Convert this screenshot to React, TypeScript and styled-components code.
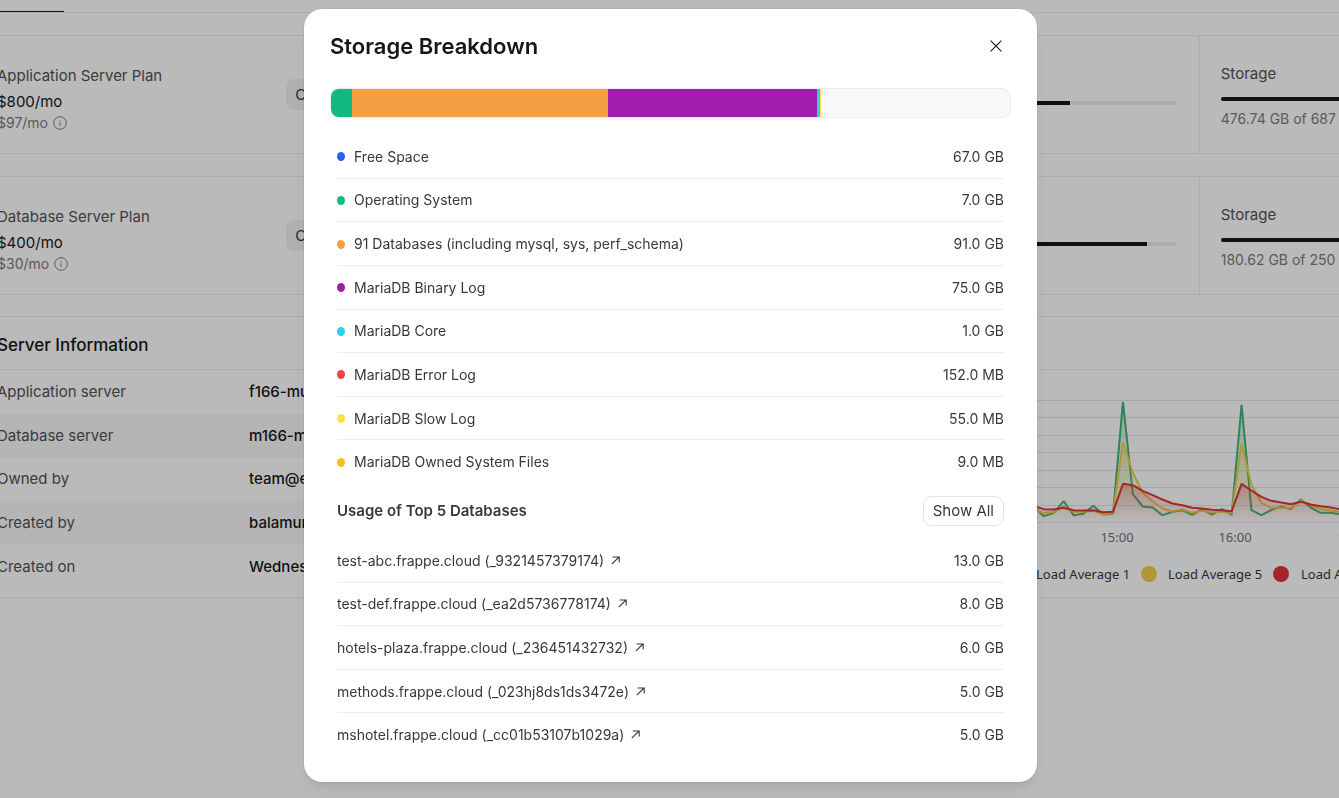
import React from 'react';
import styled, { createGlobalStyle } from 'styled-components';

const GlobalStyle = createGlobalStyle`
  *, *::before, *::after { box-sizing: border-box; }
  html, body, #root { height: 100%; }
  body {
    margin: 0;
    overflow: hidden;
    background: #fff;
    color: #383838;
    font-family: Inter, "Liberation Sans", sans-serif;
    font-size: 15px;
    line-height: 20px;
  }
  h1, h2, h3, p, dl, dd, ul { margin: 0; padding: 0; }
  button { font: inherit; cursor: pointer; }
`;

/* ---------- server overview page ---------- */

const Viewport = styled.div`
  height: 100%;
  overflow: hidden;
`;

const Page = styled.main`
  width: calc(100% + 292px);
  margin-left: -24px;
  display: flex;
  flex-direction: column;
  gap: 22px;
`;

const TabBar = styled.nav`
  height: 13px;
  display: flex;
  align-items: flex-end;
  padding-left: 22px;
  border-bottom: 1px solid #ededed;
`;

const ActiveTab = styled.a`
  width: 66px;
  height: 12px;
  border-bottom: 1px solid #171717;
`;

const Card = styled.section`
  display: grid;
  grid-template-columns: repeat(4, 1fr);
  height: 119px;
  border: 1px solid #ededed;
  border-radius: 8px;
`;

const PlanCell = styled.div`
  display: flex;
  align-items: center;
  justify-content: space-between;
  padding: 0 23px 0 20px;
`;

const PlanText = styled.div`
  padding-top: 10px;
`;

const PlanName = styled.h3`
  font-size: 15px;
  font-weight: 400;
  line-height: 20px;
  color: #525252;
  margin-bottom: 5px;
`;

const Price = styled.p`
  font-size: 15px;
  line-height: 22px;
  color: #171717;
`;

const DailyPrice = styled.p`
  display: flex;
  align-items: center;
  gap: 5px;
  font-size: 14px;
  line-height: 20px;
  color: #7c7c7c;
`;

const SubtleButton = styled.button`
  height: 31px;
  width: 75px;
  padding: 0 9px;
  border: 0;
  border-radius: 8px;
  background: #f1f1f1;
  color: #383838;
  text-align: left;
`;

const MeterCell = styled.div`
  padding: 28px 22px 0 21px;
  border-left: 1px solid #ededed;
`;

const MeterLabel = styled.div<{ $tall?: boolean }>`
  height: ${(p) => (p.$tall ? 37 : 33)}px;
  line-height: 20px;
  color: #525252;
`;

const Meter = styled.div`
  height: 4px;
  margin-bottom: 8px;
  border-radius: 2px;
  background: #ededed;
  overflow: hidden;
`;

const MeterFill = styled.div`
  height: 100%;
  background: #171717;
`;

const MeterCaption = styled.p`
  font-size: 14px;
  white-space: nowrap;
  color: #7c7c7c;
`;

const Panels = styled.div`
  display: grid;
  grid-template-columns: 1fr 1fr;
  gap: 22px;
  margin-top: -1px;
`;

const Panel = styled.section`
  height: 282px;
  border: 1px solid #ededed;
  border-radius: 8px;
  overflow: hidden;
`;

const PanelHeader = styled.header`
  height: 53px;
  display: flex;
  align-items: center;
  padding: 4px 20px 0;
  border-bottom: 1px solid #ededed;
`;

const PanelTitle = styled.h2`
  font-size: 17px;
  line-height: 24px;
  font-weight: 500;
  color: #171717;
`;

const Facts = styled.dl`
  display: grid;
  grid-auto-rows: 1fr;
  height: 219px;
`;

const Fact = styled.div`
  display: grid;
  grid-template-columns: 252px 1fr;
  align-items: center;
  padding: 0 20px;
  color: #525252;
  &:nth-child(even) { background: #f8f8f8; }
`;

const FactValue = styled.dd`
  font-weight: 500;
  color: #171717;
`;

const ChartSvg = styled.svg`
  display: block;
  width: 100%;
  height: 227px;
  font-family: "Noto Sans", sans-serif;
`;

/* ---------- dialog ---------- */

const Backdrop = styled.div`
  position: fixed;
  inset: 0;
  display: flex;
  align-items: flex-start;
  justify-content: center;
  padding: 9px 0 16px 2px;
  background: rgba(0, 0, 0, 0.27);
  overflow: auto;
`;

const Dialog = styled.div`
  width: 100%;
  max-width: 733px;
  padding: 22px 26px 25px 26px;
  border-radius: 18px;
  background: #fff;
  box-shadow: 0 0 1px rgba(0, 0, 0, 0.35), 0 6px 8px -4px rgba(0, 0, 0, 0.1),
    0 14px 22px rgba(0, 0, 0, 0.04);
`;

const DialogHeader = styled.header`
  display: flex;
  align-items: center;
  justify-content: space-between;
  height: 30px;
`;

const DialogTitle = styled.h1`
  font-size: 22px;
  line-height: 30px;
  font-weight: 600;
  color: #171717;
`;

const CloseButton = styled.button`
  display: grid;
  place-items: center;
  width: 30px;
  height: 30px;
  padding: 0;
  border: 0;
  border-radius: 8px;
  background: transparent;
  color: #171717;
`;

const UsageBar = styled.div`
  display: flex;
  height: 30px;
  margin-top: 27px;
  width: 100%;
  border: 1px solid #ededed;
  border-radius: 9px;
  background: #f8f8f8;
  overflow: hidden;
`;

const Segment = styled.div`
  flex: none;
  height: 100%;
`;

const Content = styled.div`
  padding: 17px 7px 0;
`;

const List = styled.ul<{ $height: number }>`
  display: grid;
  grid-auto-rows: 1fr;
  min-height: ${(p) => p.$height}px;
  list-style: none;
  font-size: 14px;
`;

const Row = styled.li`
  display: flex;
  align-items: center;
  padding-top: 1px;
  border-bottom: 1px solid #ededed;
  &:last-child { border-bottom-color: transparent; }
`;

const Dot = styled.span<{ $color: string }>`
  width: 8px;
  height: 9px;
  margin-right: 9px;
  border-radius: 50%;
  background: ${(p) => p.$color};
`;

const Amount = styled.span`
  margin-left: auto;
`;

const SiteLink = styled.a`
  display: inline-flex;
  align-items: center;
  gap: 7px;
  color: inherit;
  text-decoration: none;
`;

const SectionHeader = styled.div`
  display: flex;
  align-items: center;
  justify-content: space-between;
  margin: 12px 0 13px;
`;

const SectionTitle = styled.h2`
  font-size: 15px;
  line-height: 20px;
  font-weight: 600;
`;

const OutlineButton = styled.button`
  height: 30px;
  padding: 0 9px;
  border: 1px solid #e2e2e2;
  border-radius: 9px;
  background: #fff;
  color: #383838;
`;

/* ---------- data ---------- */

const breakdown = [
  { label: 'Free Space', amount: '67.0 GB', color: '#2563eb', share: 0 },
  { label: 'Operating System', amount: '7.0 GB', color: '#10b981', share: 3.1 },
  { label: '91 Databases (including mysql, sys, perf_schema)', amount: '91.0 GB', color: '#f59e42', share: 37.7 },
  { label: 'MariaDB Binary Log', amount: '75.0 GB', color: '#a21caf', share: 30.8 },
  { label: 'MariaDB Core', amount: '1.0 GB', color: '#22d3ee', share: 0.4 },
  { label: 'MariaDB Error Log', amount: '152.0 MB', color: '#ef4444', share: 0 },
  { label: 'MariaDB Slow Log', amount: '55.0 MB', color: '#fde047', share: 0.15 },
  { label: 'MariaDB Owned System Files', amount: '9.0 MB', color: '#fbbf24', share: 0 },
];

const databases = [
  ['test-abc.frappe.cloud (_9321457379174)', '13.0 GB'],
  ['test-def.frappe.cloud (_ea2d5736778174)', '8.0 GB'],
  ['hotels-plaza.frappe.cloud (_236451432732)', '6.0 GB'],
  ['methods.frappe.cloud (_023hj8ds1ds3472e)', '5.0 GB'],
  ['mshotel.frappe.cloud (_cc01b53107b1029a)', '5.0 GB'],
];

const plans = [
  { name: 'Application Server Plan', price: '$800/mo', daily: '$97/mo', memory: 70.5, storage: 69, caption: '476.74 GB of 687 GB' },
  { name: 'Database Server Plan', price: '$400/mo', daily: '$30/mo', memory: 91.7, storage: 72, caption: '180.62 GB of 250 GB' },
];

const facts = [
  ['Application server', 'f166-mumbai.frappe.cloud'],
  ['Database server', 'm166-mumbai.frappe.cloud'],
  ['Owned by', 'team@erpnext.com'],
  ['Created by', 'balamurali@erpnext.com'],
  ['Created on', 'Wednesday'],
];

const loads = [
  { name: 'Load Average 1', color: '#3fb57c', values: [47, 19, 29, 64, 22, 26, 50, 24, 27, 362, 85, 48, 45, 22, 32, 37, 23, 40, 24, 40, 23, 353, 37, 22, 37, 48, 40, 70, 45, 29, 29, 25] },
  { name: 'Load Average 5', color: '#f0d149', values: [39, 29, 31, 49, 32, 32, 35, 24, 29, 240, 150, 89, 63, 42, 33, 39, 29, 35, 30, 33, 28, 238, 114, 59, 43, 45, 43, 67, 52, 40, 36, 32] },
  { name: 'Load Average 15', color: '#e03636', values: [49, 40, 39, 44, 37, 36, 37, 31, 32, 116, 112, 95, 82, 69, 57, 52, 44, 42, 38, 37, 34, 116, 96, 77, 65, 60, 55, 62, 54, 49, 45, 40] },
];

/* ---------- parts ---------- */

function InfoIcon() {
  return (
    <svg width="14" height="14" viewBox="0 0 14 14" fill="none" stroke="currentColor" aria-hidden="true">
      <circle cx="7" cy="7" r="6.3" />
      <path d="M7 6.2V10" />
      <path d="M7 3.9V5" />
    </svg>
  );
}

function ArrowIcon() {
  return (
    <svg width="9" height="10" viewBox="0 0 9 10" fill="none" stroke="currentColor" strokeWidth="1.1" aria-hidden="true">
      <path d="M0.8 8.2 8 1M1.6 1H8.2V6.6" />
    </svg>
  );
}

const BASE = 152;
const STEP = 9.884;

function LoadChart() {
  const x = (i: number) => 230 + i * STEP;
  const y = (v: number) => BASE + 0.5 - v / 3;
  return (
    <ChartSvg role="img" aria-label="Load average">
      <defs>
        {loads.map((s, i) => (
          <linearGradient key={s.name} id={`area-${i}`} x1="0" y1="0" x2="0" y2="1">
            <stop offset="0" stopColor={s.color} stopOpacity="0.3" />
            <stop offset="1" stopColor={s.color} stopOpacity="0" />
          </linearGradient>
        ))}
      </defs>
      <g stroke="#dfe4f2" strokeWidth="1">
        {[0, 17, 35, 52, 70, 87, 105, 122].map((h) => (
          <line key={h} x1="40" x2="780" y1={BASE - h + 0.5} y2={BASE - h + 0.5} />
        ))}
      </g>
      {loads.map((s, i) => {
        const line = s.values.map((v, k) => `${x(k)},${y(v)}`).join(' ');
        return (
          <g key={s.name}>
            <polygon points={`${x(0)},${BASE} ${line} ${x(s.values.length - 1)},${BASE}`} fill={`url(#area-${i})`} />
            <polyline points={line} fill="none" stroke={s.color} strokeWidth="2" strokeLinejoin="bevel" />
          </g>
        );
      })}
      <g fontSize="13" fill="#6e7079" textAnchor="middle">
        <text x="313" y="172">15:00</text>
        <text x="431" y="172">16:00</text>
        <text x="550" y="172">17:00</text>
      </g>
      <g fontSize="13" fill="#383838">
        <circle cx="213" cy="204" r="8" fill={loads[0].color} />
        <text x="232" y="209">Load Average 1</text>
        <circle cx="345" cy="204" r="8" fill={loads[1].color} />
        <text x="364" y="209">Load Average 5</text>
        <circle cx="477" cy="204" r="8" fill={loads[2].color} />
        <text x="497" y="209">Load Average 15</text>
      </g>
    </ChartSvg>
  );
}

function PlanCard({ plan }: { plan: (typeof plans)[number] }) {
  return (
    <Card>
      <PlanCell>
        <PlanText>
          <PlanName>{plan.name}</PlanName>
          <Price>{plan.price}</Price>
          <DailyPrice>
            {plan.daily}
            <InfoIcon />
          </DailyPrice>
        </PlanText>
        <SubtleButton type="button">Change</SubtleButton>
      </PlanCell>
      <MeterCell />
      <MeterCell>
        <MeterLabel $tall>Memory</MeterLabel>
        <Meter>
          <MeterFill style={{ width: `${plan.memory}%` }} />
        </Meter>
      </MeterCell>
      <MeterCell>
        <MeterLabel>Storage</MeterLabel>
        <Meter>
          <MeterFill style={{ width: `${plan.storage}%` }} />
        </Meter>
        <MeterCaption>{plan.caption}</MeterCaption>
      </MeterCell>
    </Card>
  );
}

function StorageDialog() {
  return (
    <Backdrop>
      <Dialog role="dialog" aria-modal="true" aria-labelledby="dialog-title">
        <DialogHeader>
          <DialogTitle id="dialog-title">Storage Breakdown</DialogTitle>
          <CloseButton type="button" aria-label="Close">
            <svg width="12" height="12" viewBox="0 0 12 12" fill="none" stroke="currentColor" strokeWidth="1.1">
              <path d="M0.6 0.6 11.4 11.4M11.4 0.6 0.6 11.4" />
            </svg>
          </CloseButton>
        </DialogHeader>
        <UsageBar>
          {breakdown.filter((b) => b.share > 0).map((b) => (
            <Segment key={b.label} style={{ width: `${b.share}%`, background: b.color }} />
          ))}
        </UsageBar>
        <Content>
          <List $height={349}>
            {breakdown.map((b) => (
              <Row key={b.label}>
                <Dot $color={b.color} />
                {b.label}
                <Amount>{b.amount}</Amount>
              </Row>
            ))}
          </List>
          <SectionHeader>
            <SectionTitle>Usage of Top 5 Databases</SectionTitle>
            <OutlineButton type="button">Show All</OutlineButton>
          </SectionHeader>
          <List $height={218}>
            {databases.map(([name, amount]) => (
              <Row key={name}>
                <SiteLink href="#">
                  {name}
                  <ArrowIcon />
                </SiteLink>
                <Amount>{amount}</Amount>
              </Row>
            ))}
          </List>
        </Content>
      </Dialog>
    </Backdrop>
  );
}

export default function App() {
  return (
    <>
      <GlobalStyle />
      <Viewport>
        <Page>
          <TabBar>
            <ActiveTab href="#" aria-label="Overview" />
          </TabBar>
          {plans.map((p) => (
            <PlanCard key={p.name} plan={p} />
          ))}
          <Panels>
            <Panel>
              <PanelHeader>
                <PanelTitle>Server Information</PanelTitle>
              </PanelHeader>
              <Facts>
                {facts.map(([k, v]) => (
                  <Fact key={k}>
                    <dt>{k}</dt>
                    <FactValue>{v}</FactValue>
                  </Fact>
                ))}
              </Facts>
            </Panel>
            <Panel>
              <PanelHeader />
              <LoadChart />
            </Panel>
          </Panels>
        </Page>
      </Viewport>
      <StorageDialog />
    </>
  );
}
